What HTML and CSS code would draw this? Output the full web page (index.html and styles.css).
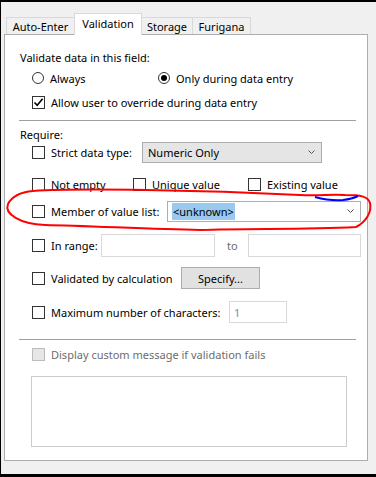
FILE: index.html
```html
<!DOCTYPE html>
<html lang="en">
<head>
  <meta charset="UTF-8">
  <title>Field Options: Validation</title>
  <link rel="stylesheet" href="styles.css">
</head>
<body>

  <div class="window">
    <div class="tabs">
      <div class="tab tab-auto">Auto-Enter</div>
      <div class="tab tab-validation active">Validation</div>
      <div class="tab tab-storage">Storage</div>
      <div class="tab tab-furigana">Furigana</div>
    </div>

    <div class="panel">
      <div class="row title">Validate data in this field:</div>

      <div class="row radios indent">
        <label class="opt opt-always"><span class="radio"></span>Always</label>
        <label class="opt"><span class="radio on"></span>Only during data entry</label>
      </div>

      <div class="row allow indent">
        <span class="check on">
          <svg width="11" height="11" viewBox="0 0 11 11"><path d="M1.5 5.5 L4.2 8.3 L9.6 1.8" fill="none" stroke="#000" stroke-width="1.6"/></svg>
        </span>
        Allow user to override during data entry
      </div>

      <div class="sep sep-top"></div>

      <div class="row require">Require:</div>

      <div class="row strict indent">
        <label class="opt w-strict"><span class="check"></span>Strict data type:</label>
        <div class="select select-gray w-select1">
          <span>Numeric Only</span>
          <svg class="chev" width="7" height="5" viewBox="0 0 7 5"><path d="M0.5 0.5 L3.5 3.5 L6.5 0.5" fill="none" stroke="#555" stroke-width="1"/></svg>
        </div>
      </div>

      <div class="row notempty indent">
        <label class="opt w-notempty"><span class="check"></span>Not empty</label>
        <label class="opt w-unique"><span class="check"></span>Unique value</label>
        <label class="opt"><span class="check"></span>Existing value</label>
      </div>

      <div class="row member indent">
        <label class="opt w-member"><span class="check"></span>Member of value list:</label>
        <div class="select w-select2">
          <span class="hilite">&lt;unknown&gt;</span>
          <svg class="chev" width="7" height="5" viewBox="0 0 7 5"><path d="M0.5 0.5 L3.5 3.5 L6.5 0.5" fill="none" stroke="#555" stroke-width="1"/></svg>
        </div>
      </div>

      <div class="row inrange indent">
        <label class="opt w-range"><span class="check"></span>In range:</label>
        <div class="field w-from"></div>
        <span class="to">to</span>
        <div class="field w-to"></div>
      </div>

      <div class="row calc indent">
        <label class="opt w-calc"><span class="check"></span>Validated by calculation</label>
        <button class="btn">Specify...</button>
      </div>

      <div class="row maxchars indent">
        <label class="opt w-max"><span class="check"></span>Maximum number of characters:</label>
        <div class="field w-maxfield">1</div>
      </div>

      <div class="sep sep-bottom"></div>

      <div class="row display indent disabled">
        <label class="opt"><span class="check"></span>Display custom message if validation fails</label>
      </div>

      <div class="message"></div>
    </div>
  </div>

  <!-- hand-drawn markup over the screenshot -->
  <svg class="markup" width="376" height="477" viewBox="0 0 376 477">
    <path d="M33 191 C 80 188, 200 190, 300 195 C 320 196, 330 194, 345 195 C 360 195, 368 196, 370 203 C 372 212, 366 222, 356 227 C 300 230, 250 228, 200 230 C 150 229, 90 226, 45 225 C 20 224, 4 214, 8 204 C 12 196, 22 192, 33 191 Z" fill="none" stroke="#ff0000" stroke-width="2"/>
    <path d="M315 197 Q 330 201 343 200 Q 352 199 358 196" fill="none" stroke="#0000ff" stroke-width="2"/>
  </svg>

</body>
</html>
```

FILE: styles.css
```css
body {
  margin: 0;
  background-color: #000;
  font-family: 'Noto Sans', 'Segoe UI', sans-serif;
  font-size: 11px;
  color: #000;
  height: 477px;
  overflow: hidden;
}

.window {
  margin: 2px 0 0 1px;
  width: 375px;
  height: 472px;
  background-color: #f0f0f0;
  padding-top: 11px;
  box-sizing: border-box;
}

/* tabs */

.tabs {
  display: flex;
  align-items: flex-end;
  margin-left: 5px;
}

.tab {
  box-sizing: border-box;
  height: 17px;
  border: 1px solid #d9d9d9;
  border-bottom: none;
  background-color: #f0f0f0;
  display: flex;
  align-items: center;
  justify-content: center;
  margin-left: -1px;
}

.tab-auto { width: 69px; margin-left: 0; }
.tab-validation { width: 68px; }
.tab-storage { width: 52px; }
.tab-furigana { width: 59px; }

.tab.active {
  height: 22px;
  background-color: #fff;
  margin-bottom: -1px;
  position: relative;
  z-index: 1;
  padding-bottom: 3px;
}

/* panel */

.panel {
  box-sizing: border-box;
  margin-left: 3px;
  width: 364px;
  height: 427px;
  background-color: #fff;
  border: 1px solid #adadad;
  padding: 0 0 0 15px;
}

.row {
  display: flex;
  align-items: center;
  height: 20px;
  white-space: nowrap;
}

.indent { margin-left: 12px; }

.title { margin-top: 12px; }
.radios { margin-top: 1px; }
.allow { margin-top: 4px; }
.require { margin-top: 6px; height: 15px; }
.strict { margin-top: 0; height: 21px; }
.notempty { margin-top: 11px; }
.member { margin-top: 7px; height: 21px; }
.inrange { margin-top: 12px; height: 23px; }
.calc { margin-top: 10px; height: 22px; }
.maxchars { margin-top: 12px; height: 22px; }
.display { margin-top: 5px; height: 19px; }

.sep {
  height: 1px;
  width: 337px;
  margin-left: -1px;
  background-color: #a0a0a0;
}

.sep-top { margin-top: 8px; }
.sep-bottom { margin-top: 16px; }

/* options */

.opt {
  display: flex;
  align-items: center;
}

.opt-always { width: 126px; }

.radio {
  box-sizing: border-box;
  width: 12px;
  height: 12px;
  border: 1px solid #333;
  border-radius: 50%;
  margin-right: 6px;
  display: flex;
  align-items: center;
  justify-content: center;
}

.radio.on::after {
  content: '';
  width: 6px;
  height: 6px;
  border-radius: 50%;
  background-color: #000;
}

.check {
  box-sizing: border-box;
  width: 13px;
  height: 13px;
  border: 1px solid #333;
  background-color: #fff;
  margin-right: 6px;
  display: flex;
  align-items: center;
  justify-content: center;
  flex-shrink: 0;
}

.w-strict { width: 110px; }
.w-notempty { width: 101px; }
.w-unique { width: 115px; }
.w-member { width: 135px; }
.w-range { width: 69px; }
.w-calc { width: 149px; }
.w-max { width: 197px; }

/* inputs */

.select {
  box-sizing: border-box;
  height: 21px;
  border: 1px solid #adadad;
  background-color: #fff;
  display: flex;
  align-items: center;
  justify-content: space-between;
  padding: 0 6px 0 4px;
}

.select-gray {
  background-color: #e5e5e5;
  padding-left: 5px;
}

.w-select1 { width: 180px; }
.w-select2 { width: 194px; }

.hilite {
  background-color: #99c9ef;
  padding: 1px 1px;
}

.field {
  box-sizing: border-box;
  height: 23px;
  border: 1px solid #d9d9d9;
  background-color: #fff;
  color: #8a8a8a;
  padding-left: 4px;
  display: flex;
  align-items: center;
}

.w-from { width: 114px; }
.w-to { width: 113px; }
.w-maxfield { width: 58px; height: 22px; }

.to {
  width: 33px;
  padding-left: 12px;
  box-sizing: border-box;
  color: #6d6d6d;
}

.btn {
  box-sizing: border-box;
  width: 79px;
  height: 22px;
  border: 1px solid #adadad;
  background-color: #e1e1e1;
  font-family: inherit;
  font-size: 11px;
  color: #000;
  padding: 0;
}

.disabled { color: #6d6d6d; }

.disabled .check {
  border-color: #bcbcbc;
  background-color: #e6e6e6;
}

.message {
  box-sizing: border-box;
  margin: 12px 0 0 11px;
  width: 316px;
  height: 71px;
  border: 1px solid #cccccc;
}

.markup {
  position: absolute;
  top: 0;
  left: 0;
  pointer-events: none;
}
```
